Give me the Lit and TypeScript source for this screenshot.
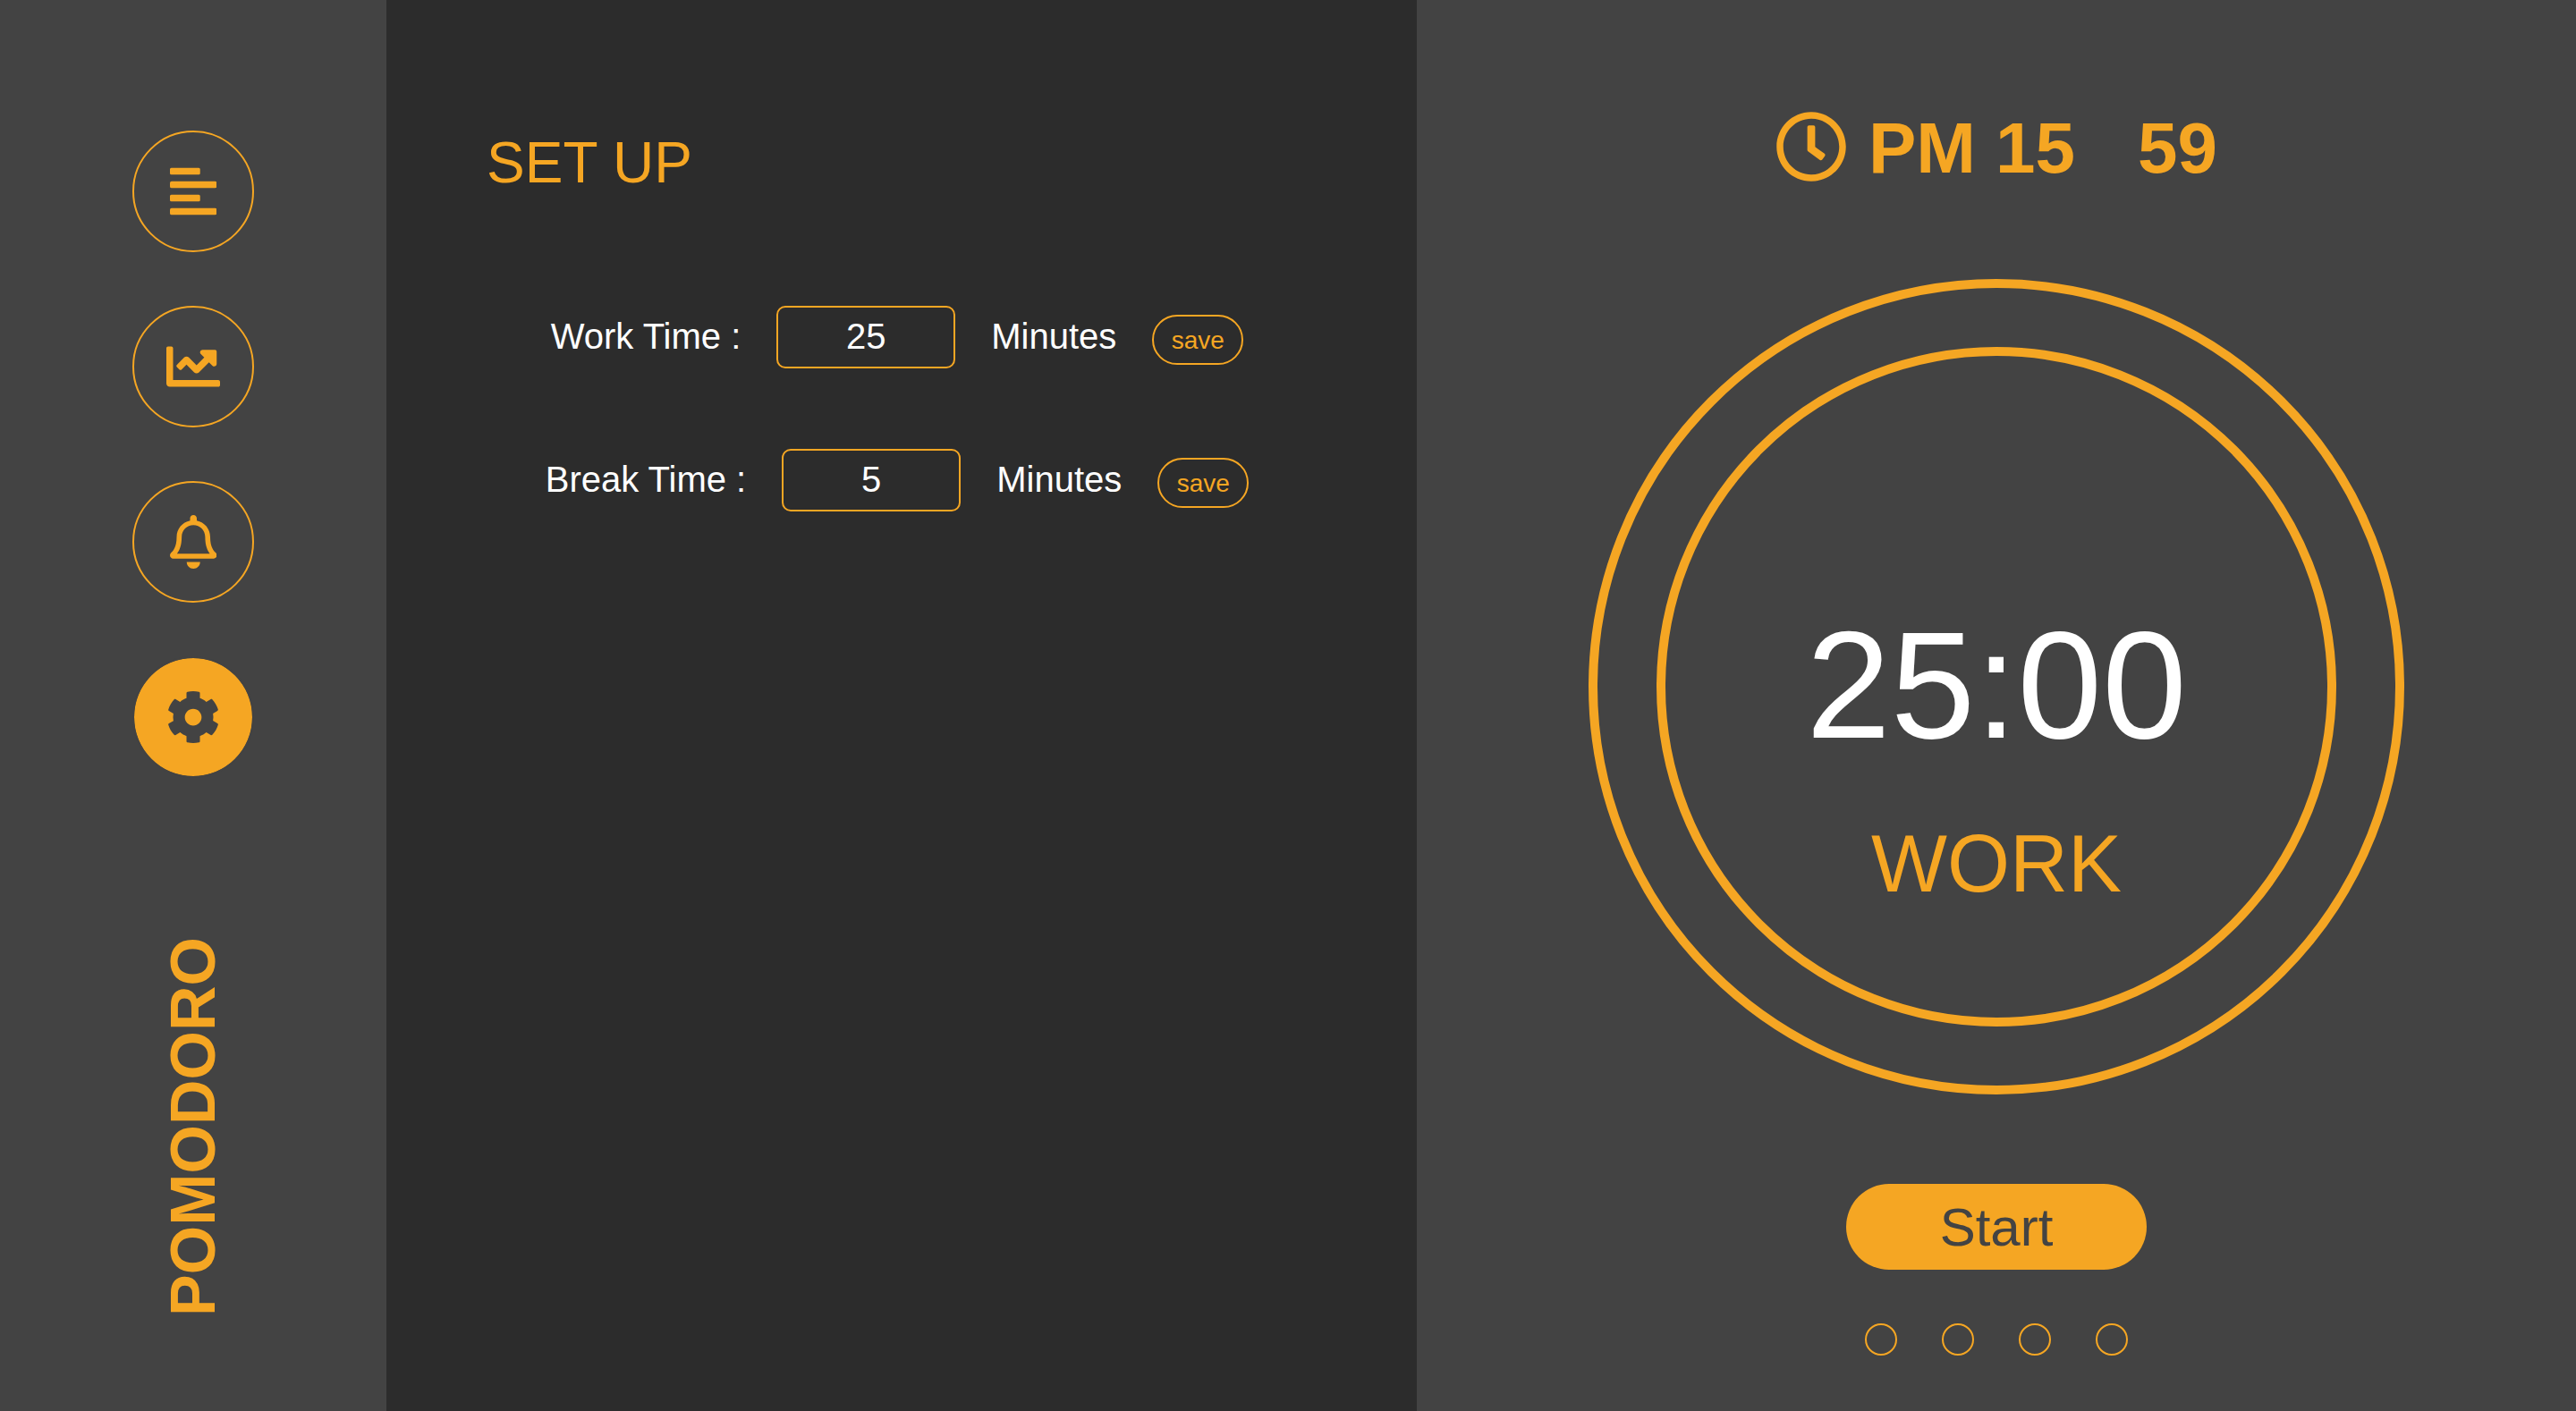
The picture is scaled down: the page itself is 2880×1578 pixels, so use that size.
import { LitElement, html, css, svg } from "lit";
import { customElement, property, state } from "lit/decorators.js";
import { classMap } from "lit/directives/class-map.js";

interface Glyph {
  width: number;
  path: string;
}

const GLYPHS: Record<string, Glyph> = {
  list: {
    width: 448,
    path: "M12.83 352h262.34A12.82 12.82 0 0 0 288 339.17v-38.34A12.82 12.82 0 0 0 275.17 288H12.83A12.82 12.82 0 0 0 0 300.83v38.34A12.82 12.82 0 0 0 12.83 352zm0-256h262.34A12.82 12.82 0 0 0 288 83.17V44.83A12.82 12.82 0 0 0 275.17 32H12.83A12.82 12.82 0 0 0 0 44.83v38.34A12.82 12.82 0 0 0 12.83 96zM432 160H16a16 16 0 0 0-16 16v32a16 16 0 0 0 16 16h416a16 16 0 0 0 16-16v-32a16 16 0 0 0-16-16zm0 256H16a16 16 0 0 0-16 16v32a16 16 0 0 0 16 16h416a16 16 0 0 0 16-16v-32a16 16 0 0 0-16-16z",
  },
  chart: {
    width: 512,
    path: "M496 384H64V80c0-8.84-7.16-16-16-16H16C7.16 64 0 71.16 0 80v336c0 17.67 14.33 32 32 32h464c8.84 0 16-7.16 16-16v-32c0-8.84-7.16-16-16-16zM464 96H345.94c-21.38 0-32.09 25.85-16.97 40.97l32.4 32.4L288 242.75l-73.37-73.37c-12.5-12.5-32.76-12.5-45.25 0l-68.69 68.69c-6.25 6.25-6.25 16.38 0 22.63l22.62 22.62c6.25 6.25 16.38 6.25 22.63 0L192 237.25l73.37 73.37c12.5 12.5 32.76 12.5 45.25 0l96-96 32.4 32.4c15.12 15.12 40.97 4.41 40.97-16.97V112c.01-8.84-7.15-16-15.99-16z",
  },
  bell: {
    width: 448,
    path: "M439.39 362.29c-19.32-20.76-55.47-51.99-55.47-154.29 0-77.7-54.48-139.9-127.94-155.16V32c0-17.67-14.32-32-31.98-32s-31.98 14.33-31.98 32v20.84C118.56 68.1 64.08 130.3 64.08 208c0 102.3-36.15 133.53-55.47 154.29-6 6.45-8.66 14.16-8.61 21.71.11 16.4 12.98 32 32.1 32h383.8c19.12 0 32-15.6 32.1-32 .05-7.55-2.61-15.27-8.61-21.71zM67.53 368c21.22-27.97 44.42-74.33 44.53-159.42 0-.2-.06-.38-.06-.58 0-61.86 50.14-112 112-112s112 50.14 112 112c0 .2-.06.38-.06.58.11 85.1 23.31 131.46 44.53 159.42H67.53zM224 512c35.32 0 63.97-28.65 63.97-64H160.03c0 35.35 28.65 64 63.97 64z",
  },
  cog: {
    width: 512,
    path: "M487.4 315.7l-42.6-24.6c4.3-23.2 4.3-47 0-70.2l42.6-24.6c4.9-2.8 7.1-8.6 5.5-14-11.1-35.6-30-67.8-54.7-94.6-3.8-4.1-10-5.1-14.8-2.3L380.8 110c-17.9-15.4-38.5-27.3-60.8-35.1V25.8c0-5.6-3.9-10.5-9.4-11.7-36.7-8.2-74.3-7.8-109.2 0-5.5 1.2-9.4 6.1-9.4 11.7V75c-22.2 7.9-42.8 19.8-60.8 35.1L88.7 85.5c-4.9-2.8-11-1.9-14.8 2.3-24.7 26.7-43.6 58.9-54.7 94.6-1.7 5.4.6 11.2 5.5 14L67.3 221c-4.3 23.2-4.3 47 0 70.2l-42.6 24.6c-4.9 2.8-7.1 8.6-5.5 14 11.1 35.6 30 67.8 54.7 94.6 3.8 4.1 10 5.1 14.8 2.3l42.6-24.6c17.9 15.4 38.5 27.3 60.8 35.1v49.2c0 5.6 3.9 10.5 9.4 11.7 36.7 8.2 74.3 7.8 109.2 0 5.5-1.2 9.4-6.1 9.4-11.7v-49.2c22.2-7.9 42.8-19.8 60.8-35.1l42.6 24.6c4.9 2.8 11 1.9 14.8-2.3 24.7-26.7 43.6-58.9 54.7-94.6 1.5-5.5-.7-11.3-5.6-14.1zM256 336c-44.1 0-80-35.9-80-80s35.9-80 80-80 80 35.9 80 80-35.9 80-80 80z",
  },
  clock: {
    width: 512,
    path: "M256 8C119 8 8 119 8 256s111 248 248 248 248-111 248-248S393 8 256 8zm0 448c-110.5 0-200-89.5-200-200S145.5 56 256 56s200 89.5 200 200-89.5 200-200 200zm61.8-104.4l-84.9-61.7c-3.1-2.3-4.9-5.9-4.9-9.7V116c0-6.6 5.4-12 12-12h32c6.6 0 12 5.4 12 12v141.7l66.8 48.6c5.4 3.9 6.5 11.4 2.6 16.8L334.6 349c-3.9 5.3-11.4 6.5-16.8 2.6z",
  },
};

/** Solid glyph, one em high, painted in the current colour. */
@customElement("app-icon")
export class AppIcon extends LitElement {
  static styles = css`
    :host {
      display: block;
      height: 1em;
    }
    .glyph {
      display: block;
      height: 1em;
      fill: currentColor;
    }
  `;

  @property() name = "clock";

  render() {
    const glyph = GLYPHS[this.name];
    return html`<svg class="glyph" viewBox="0 0 ${glyph.width} 512" aria-hidden="true">
      ${svg`<path d=${glyph.path}></path>`}
    </svg>`;
  }
}

@customElement("side-nav")
export class SideNav extends LitElement {
  static styles = css`
    :host {
      display: flex;
      flex-direction: column;
      align-items: center;
      box-sizing: border-box;
      padding: 146px 0 0;
      background: var(--surface);
    }
    .items {
      display: flex;
      flex-direction: column;
      gap: 60px;
    }
    .item {
      display: flex;
      align-items: center;
      justify-content: center;
      box-sizing: border-box;
      width: 136px;
      height: 136px;
      padding: 0;
      border: 2px solid var(--accent);
      border-radius: 50%;
      background: transparent;
      color: var(--accent);
      font-size: 60px;
      cursor: pointer;
    }
    .item.active {
      border-color: var(--surface);
      background: var(--accent);
      background-clip: padding-box;
      color: var(--surface);
    }
    .brand {
      margin: 178px 0 0;
      writing-mode: vertical-rl;
      transform: rotate(180deg);
      color: var(--accent);
      font-size: 70px;
      font-weight: 700;
      line-height: 80px;
    }
  `;

  @state() private active = "cog";

  private readonly items = [
    { icon: "list", label: "Tasks" },
    { icon: "chart", label: "Statistics" },
    { icon: "bell", label: "Alarm" },
    { icon: "cog", label: "Settings" },
  ];

  render() {
    return html`
      <nav class="items">
        ${this.items.map(
          ({ icon, label }) => html`
            <button
              class=${classMap({ item: true, active: icon === this.active })}
              type="button"
              aria-label=${label}
              @click=${() => (this.active = icon)}
            >
              <app-icon name=${icon}></app-icon>
            </button>
          `,
        )}
      </nav>
      <h1 class="brand">POMODORO</h1>
    `;
  }
}

@customElement("setup-panel")
export class SetupPanel extends LitElement {
  static styles = css`
    :host {
      display: block;
      box-sizing: border-box;
      padding: 142px 112px 0;
      background: var(--panel);
    }
    .title {
      margin: 0;
      color: var(--accent);
      font-size: 64px;
      font-weight: 400;
      line-height: 80px;
    }
    .rows {
      display: flex;
      flex-direction: column;
      align-items: center;
      gap: 90px;
      padding: 120px 10px 0 0;
    }
    .row {
      display: flex;
      align-items: baseline;
      gap: 40px;
      color: #fff;
      font-size: 40px;
      line-height: 48px;
      white-space: nowrap;
    }
    .value {
      box-sizing: border-box;
      width: 200px;
      height: 70px;
      margin: 0;
      padding: 0 0 2px;
      border: 2px solid var(--accent);
      border-radius: 10px;
      outline: none;
      background: transparent;
      color: inherit;
      font: inherit;
      text-align: center;
    }
    .save {
      box-sizing: border-box;
      width: 102px;
      height: 56px;
      margin: 0;
      padding: 2px 0 0;
      border: 2px solid var(--accent);
      border-radius: 28px;
      background: transparent;
      color: var(--accent);
      font-family: inherit;
      font-size: 28px;
      cursor: pointer;
    }
  `;

  private readonly fields = [
    { id: "work", label: "Work Time :", value: 25 },
    { id: "break", label: "Break Time :", value: 5 },
  ];

  render() {
    return html`
      <h2 class="title">SET UP</h2>
      <div class="rows">
        ${this.fields.map(
          ({ id, label, value }) => html`
            <form class="row" @submit=${(e: Event) => e.preventDefault()}>
              <label for=${id}>${label}</label>
              <input class="value" id=${id} type="text" inputmode="numeric" .value=${String(value)} />
              <span>Minutes</span>
              <button class="save" type="submit">save</button>
            </form>
          `,
        )}
      </div>
    `;
  }
}

@customElement("timer-panel")
export class TimerPanel extends LitElement {
  static styles = css`
    :host {
      display: flex;
      flex-direction: column;
      align-items: center;
      box-sizing: border-box;
      padding: 124px 0 62px;
      background: var(--surface);
      color: var(--accent);
    }
    .now {
      display: flex;
      align-items: flex-start;
      font-size: 80px;
      font-weight: 700;
      line-height: 84px;
    }
    .hours {
      margin: 0 70px 0 24px;
    }
    .ring {
      display: flex;
      box-sizing: border-box;
      width: 912px;
      height: 912px;
      margin: 104px 0 100px;
      padding: 66px;
      border: 10px solid var(--accent);
      border-radius: 50%;
    }
    .dial {
      display: flex;
      flex: 1;
      flex-direction: column;
      align-items: center;
      box-sizing: border-box;
      padding: 278px 0 0;
      border: 10px solid var(--accent);
      border-radius: 50%;
    }
    .left {
      color: #fff;
      font-size: 170px;
      line-height: 180px;
    }
    .phase {
      margin: 60px 0 0;
      font-size: 90px;
      line-height: 100px;
    }
    .start {
      width: 336px;
      height: 96px;
      padding: 0;
      border: 0;
      border-radius: 48px;
      background: var(--accent);
      color: var(--surface);
      font-family: inherit;
      font-size: 60px;
      cursor: pointer;
    }
    .rounds {
      display: flex;
      gap: 50px;
      margin: 60px 0 0;
      padding: 0;
      list-style: none;
    }
    .round {
      box-sizing: border-box;
      width: 36px;
      height: 36px;
      border: 2px solid var(--accent);
      border-radius: 50%;
    }
  `;

  render() {
    return html`
      <div class="now">
        <app-icon name="clock"></app-icon>
        <span class="hours">PM 15</span>
        <span>59</span>
      </div>
      <div class="ring">
        <div class="dial">
          <div class="left" role="timer">25:00</div>
          <div class="phase">WORK</div>
        </div>
      </div>
      <button class="start" type="button">Start</button>
      <ul class="rounds">
        ${[1, 2, 3, 4].map(() => html`<li class="round"></li>`)}
      </ul>
    `;
  }
}

@customElement("app-root")
export class AppRoot extends LitElement {
  static styles = css`
    :host {
      --accent: #f5a623;
      --surface: #434343;
      --panel: #2c2c2c;
      display: grid;
      grid-template-columns: 15fr 40fr 45fr;
      min-height: 100vh;
      background: var(--surface);
      font-family: "Liberation Sans", Helvetica, Arial, sans-serif;
    }
  `;

  render() {
    return html`
      <side-nav></side-nav>
      <setup-panel></setup-panel>
      <timer-panel></timer-panel>
    `;
  }
}
